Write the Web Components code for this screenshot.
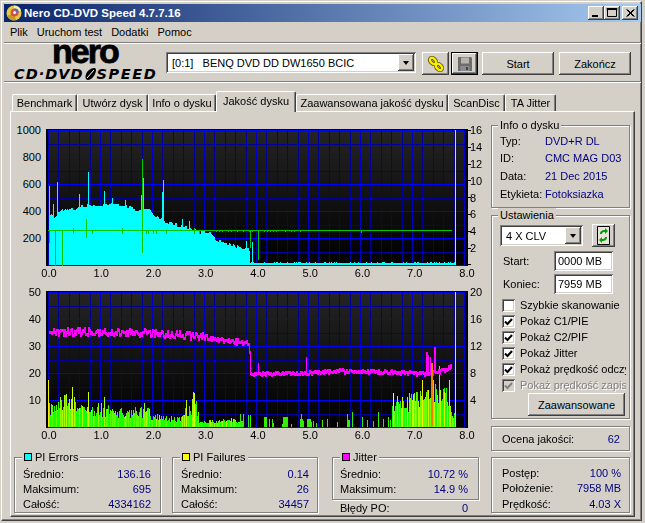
<!DOCTYPE html>
<html>
<head>
<meta charset="utf-8">
<title>Nero CD-DVD Speed</title>
<style>
  html, body { margin: 0; padding: 0; background: #d4d0c8; }
  body { font: 11px/14px "Liberation Sans", Arial, sans-serif; color: #000; }
</style>
</head>
<body>
<nero-window>
  <nero-title>Nero CD-DVD Speed 4.7.7.16</nero-title>
  <nero-menu><span>Plik</span><span>Uruchom test</span><span>Dodatki</span><span>Pomoc</span></nero-menu>
  <nero-toolbar></nero-toolbar>
  <nero-tabs>
    <nero-tab w="65">Benchmark</nero-tab>
    <nero-tab w="71">Utwórz dysk</nero-tab>
    <nero-tab w="68">Info o dysku</nero-tab>
    <nero-tab w="80" selected>Jakość dysku</nero-tab>
    <nero-tab w="152">Zaawansowana jakość dysku</nero-tab>
    <nero-tab w="57">ScanDisc</nero-tab>
    <nero-tab w="51">TA Jitter</nero-tab>
  </nero-tabs>
  <tab-panel>
    <div slot="left" style="padding-top: 17px">
      <nero-chart kind="errors"></nero-chart>
      <nero-chart kind="jitter"></nero-chart>
      <stat-row-boxes></stat-row-boxes>
    </div>
    <side-column slot="right"></side-column>
  </tab-panel>
</nero-window>

<script>
const FACE = '#d4d0c8';
const RAISED = 'box-shadow: inset -1px -1px #404040, inset 1px 1px #fff, inset -2px -2px #808080;';
const SUNKEN = 'box-shadow: inset 1px 1px #808080, inset -1px -1px #fff, inset 2px 2px #404040, inset -2px -2px ' + FACE + ';';

// window frame
class NeroWindow extends HTMLElement {
  constructor() {
    super();
    this.attachShadow({mode: 'open'}).innerHTML = `
    <style>
      :host { display: block; width: 645px; height: 523px; box-sizing: border-box; padding: 1px 3px 2px 1px; background: ${FACE}; overflow: hidden; }
      .frame { box-sizing: border-box; height: 100%; padding: 2px 0 0 2px; border-top: 1px solid #fff; border-left: 1px solid #fff; border-right: 1px solid #404040; border-bottom: 1px solid #404040; box-shadow: inset -1px -1px #808080; }
    </style>
    <div class="frame"><slot></slot></div>`;
  }
}
customElements.define('nero-window', NeroWindow);

class NeroTitle extends HTMLElement {
  constructor() {
    super();
    this.attachShadow({mode: 'open'}).innerHTML = `
    <style>
      :host { display: flex; align-items: center; height: 18px; padding: 0 3px 0 2px; color: #fff; font-weight: bold; font-size: 11.5px; background: linear-gradient(90deg, #0a246a, #a6caf0); }
      svg.app { width: 16px; height: 16px; margin-right: 2px; flex: none; }
      .text { flex: 1; white-space: nowrap; }
      .ctl { width: 16px; height: 14px; background: ${FACE}; ${RAISED} display: block; }
      .ctl.close { margin-left: 2px; }
    </style>
    <svg class="app" viewBox="0 0 16 16">
      <circle cx="8" cy="8" r="7.5" fill="#e8c840"/><path d="M8 .5a7.5 7.5 0 0 1 7 5L8 8z" fill="#f6eea0"/><path d="M1 11a7.5 7.5 0 0 0 9 4L8 8z" fill="#c89a20"/>
      <circle cx="8.6" cy="7.6" r="4" fill="#d85040"/><path d="M8.6 3.6a4 4 0 0 1 4 4H8.6z" fill="#4070d0"/><circle cx="8.6" cy="7.6" r="1.5" fill="#fff"/>
    </svg>
    <span class="text"><slot></slot></span>
    <svg class="ctl" viewBox="0 0 16 14"><rect x="4" y="9" width="6" height="2" fill="#000"/></svg>
    <svg class="ctl" viewBox="0 0 16 14"><path d="M3.5 3.5h9v7h-9zM3 2.5h10v1H3z" fill="none" stroke="#000"/></svg>
    <svg class="ctl close" viewBox="0 0 16 14"><path d="M4.5 3.5l7 7M5.5 3.5l7 7M11.5 3.5l-7 7M12.5 3.5l-7 7" stroke="#000" fill="none"/></svg>`;
  }
}
customElements.define('nero-title', NeroTitle);

class NeroMenu extends HTMLElement {
  constructor() {
    super();
    this.attachShadow({mode: 'open'}).innerHTML = `
    <style>
      :host { display: block; height: 20px; }
      .bar { display: flex; gap: 9px; padding-left: 6px; height: 20px; align-items: center; }
      ::slotted(span) { white-space: nowrap; }
    </style>
    <div class="bar"><slot></slot></div>`;
  }
}
customElements.define('nero-menu', NeroMenu);

class WinButton extends HTMLElement {
  constructor() {
    super();
    const def = this.hasAttribute('default');
    this.attachShadow({mode: 'open'}).innerHTML = `
    <style>
      :host { display: inline-flex; align-items: center; justify-content: center; box-sizing: border-box; flex: none; background: ${FACE}; ${def ? 'outline: 1px solid #000; outline-offset: -1px; box-shadow: inset -2px -2px #404040, inset 2px 2px #fff, inset -3px -3px #808080;' : RAISED} }
    </style>
    <slot></slot>`;
  }
}
customElements.define('win-button', WinButton);

class WinCombo extends HTMLElement {
  constructor() {
    super();
    this.attachShadow({mode: 'open'}).innerHTML = `
    <style>
      :host { display: flex; box-sizing: border-box; flex: none; background: #fff; padding: 2px; ${SUNKEN} }
      .val { flex: 1; padding-left: 4px; white-space: pre; align-self: center; overflow: hidden; }
      .arrow { width: 16px; background: ${FACE}; display: flex; align-items: center; justify-content: center; ${RAISED} }
      .arrow i { border: 3.5px solid transparent; border-top: 4px solid #000; border-bottom: 0; width: 0; height: 0; }
    </style>
    <span class="val"><slot></slot></span><span class="arrow"><i></i></span>`;
  }
}
customElements.define('win-combo', WinCombo);

class NeroLogo extends HTMLElement {
  constructor() {
    super();
    this.attachShadow({mode: 'open'}).innerHTML = `
    <style>
      :host { display: block; width: 150px; flex: none; color: #000; margin-top: -12px; }
      .nero { font: bold 34px/22px "Liberation Sans", sans-serif; height: 22px; letter-spacing: -2px; -webkit-text-stroke: 0.8px #000; padding-left: 38px; }
      .sub { display: flex; align-items: center; height: 12px; margin-top: 6px; font: italic bold 14.5px/12px "DejaVu Sans", sans-serif; white-space: nowrap; }
      .a { letter-spacing: 1px; }
      .b { letter-spacing: 1.6px; }
      svg { width: 14px; height: 14px; flex: none; margin: 0 -1px 0 0; }
    </style>
    <div class="nero">nero</div>
    <div class="sub"><span class="a">CD·DVD</span><svg viewBox="0 0 14 14"><path d="M5 13C1 13 2 6 6 3c3-2 7-3 7 0 0 4-4 10-8 10z" fill="#000"/><path d="M4 11L11 3" stroke="#fff" stroke-width="1"/></svg><span class="b">SPEED</span></div>`;
  }
}
customElements.define('nero-logo', NeroLogo);

class NeroToolbar extends HTMLElement {
  constructor() {
    super();
    this.attachShadow({mode: 'open'}).innerHTML = `
    <style>
      :host { display: flex; align-items: flex-start; height: 29px; padding: 9px 10px 0 10px; margin-top: 1px; box-shadow: 0 -1px #808080, inset 0 1px #fff, 0 1px #fff; border-bottom: 1px solid #808080; }
      nero-logo { margin-right: 2px; }
      win-combo { width: 250px; height: 21px; margin: 0 6px 0 0; }
      win-button { height: 23px; }
      .ic { width: 27px; }
      .ic + .ic { margin-left: 2px; margin-right: 4px; }
      .txt { width: 72px; }
      .txt + .txt { margin-left: 5px; }
    </style>
    <nero-logo></nero-logo>
    <win-combo>[0:1]   BENQ DVD DD DW1650 BCIC</win-combo>
    <win-button class="ic">
      <svg width="18" height="18" viewBox="0 0 18 18"><g fill="none"><g stroke="#4a4400" stroke-width="4"><ellipse cx="6" cy="6" rx="3.6" ry="2.4" transform="rotate(45 6 6)"/><ellipse cx="12" cy="12" rx="3.6" ry="2.4" transform="rotate(45 12 12)"/></g><g stroke="#fcec00" stroke-width="2.4"><ellipse cx="6" cy="6" rx="3.6" ry="2.4" transform="rotate(45 6 6)"/><ellipse cx="12" cy="12" rx="3.6" ry="2.4" transform="rotate(45 12 12)"/></g></g></svg>
    </win-button>
    <win-button class="ic" default>
      <svg width="16" height="16" viewBox="0 0 16 16"><path d="M1 1h13l1 1v13H1z" fill="#6c6c6c"/><rect x="4" y="1.5" width="8" height="6" fill="#b8b4ac"/><rect x="3.5" y="10" width="9" height="5" fill="#8c8c8c"/><rect x="9" y="11" width="2" height="3" fill="#444"/></svg>
    </win-button>
    <win-button class="txt">Start</win-button>
    <win-button class="txt">Zakończ</win-button>`;
  }
}
customElements.define('nero-toolbar', NeroToolbar);

class NeroTabs extends HTMLElement {
  constructor() {
    super();
    this.attachShadow({mode: 'open'}).innerHTML = `
    <style>
      :host { display: flex; align-items: flex-end; height: 20px; padding: 9px 0 0 8px; position: relative; z-index: 1; }
    </style>
    <slot></slot>`;
  }
}
customElements.define('nero-tabs', NeroTabs);

class NeroTab extends HTMLElement {
  constructor() {
    super();
    const sel = this.hasAttribute('selected');
    this.attachShadow({mode: 'open'}).innerHTML = `
    <style>
      :host { display: flex; align-items: center; justify-content: center; box-sizing: border-box; white-space: nowrap; background: ${FACE};
        width: ${this.getAttribute('w')}px; height: ${sel ? 21 : 17}px; ${sel ? 'margin-bottom: -1px; padding-bottom: 2px;' : ''}
        border-top: 1px solid #fff; border-left: 1px solid #fff; border-right: 1px solid #404040; border-radius: 2px 2px 0 0;
        box-shadow: inset -1px 0 #808080; }
    </style>
    <slot></slot>`;
  }
}
customElements.define('nero-tab', NeroTab);

class TabPanel extends HTMLElement {
  constructor() {
    super();
    this.attachShadow({mode: 'open'}).innerHTML = `
    <style>
      :host { display: grid; grid-template-columns: 480px 139px; box-sizing: border-box; width: 625px; height: 406px; margin-left: 6px; border-top: 1px solid #fff; border-left: 1px solid #fff; border-right: 1px solid #404040; border-bottom: 1px solid #404040; box-shadow: inset -1px -1px #808080; }
    </style>
    <slot name="left"></slot><slot name="right"></slot>`;
  }
}
customElements.define('tab-panel', TabPanel);

// small seeded random, so the charts look the same on each load
function seeded(s) {
  return () => (s = (s * 16807) % 2147483647) / 2147483647;
}
function env(table, x) {
  for (let i = 1; i < table.length; i++) {
    if (x <= table[i][0]) {
      const a = table[i - 1], b = table[i];
      return a[1] + (b[1] - a[1]) * (x - a[0]) / (b[0] - a[0]);
    }
  }
  return table[table.length - 1][1];
}

class NeroChart extends HTMLElement {
  constructor() {
    super();
    const errors = this.getAttribute('kind') === 'errors';
    const left = errors ? [1000, 800, 600, 400, 200, ''] : [50, 40, 30, 20, 10, ''];
    const right = errors ? [16, 14, 12, 10, 8, 6, 4, 2, ''] : [20, 16, 12, 8, 4, ''];
    const xs = ['0.0', '1.0', '2.0', '3.0', '4.0', '5.0', '6.0', '7.0', '8.0'];
    this.attachShadow({mode: 'open'}).innerHTML = `
    <style>
      :host { display: grid; grid-template-columns: 35px 425px 1fr; grid-template-rows: 137px ${errors ? 25 : 29}px; }
      canvas { display: block; }
      .l, .r { display: flex; flex-direction: column; justify-content: space-between; height: 149px; margin-top: -6px; line-height: 14px; }
      .l span { height: 14px; text-align: right; padding-right: 5px; }
      .r span { height: 14px; margin-left: -1px; }
      .x { grid-column: 2; display: flex; justify-content: space-between; width: 418px; margin-left: 3px; line-height: 14px; }
      .x span { width: 0; display: flex; justify-content: center; }
    </style>
    <div class="l">${left.map(t => `<span>${t}</span>`).join('')}</div>
    <canvas width="425" height="137"></canvas>
    <div class="r">${right.map(t => `<span>${t}</span>`).join('')}</div>
    <div class="x">${xs.map(t => `<span>${t}</span>`).join('')}</div>`;
    this.draw(this.shadowRoot.querySelector('canvas').getContext('2d'), errors);
  }

  draw(c, errors) {
    const rect = (col, x, y, w, h) => { c.fillStyle = col; c.fillRect(x, y, w, h); };
    const END = 409;  // the white line, where the scan stopped

    rect('#000', 0, 0, 422, 137);
    const g = c.createLinearGradient(0, 1, 0, 136);
    g.addColorStop(0, '#242424');
    g.addColorStop(1, '#000');
    rect(g, 2, 1, 417, 135);

    // grid
    for (let i = 0; i <= 40; i++) {
      const x = 2 + Math.round(i * 10.4);
      rect(i % 5 === 0 ? '#0000c8' : '#000098', x, 1, 1, 135);
    }
    for (let i = 0; i <= 10; i++) {
      const y = 1 + Math.round(i * 13.5);
      rect(i % 2 === 0 ? '#0000ff' : '#000098', 2, y, 417, 1);
    }

    if (errors) this.drawErrors(rect, END);
    else this.drawJitter(rect, END);

    rect('#d8d8d8', END, 1, 1, 135);
  }

  drawErrors(rect, END) {
    const r = seeded(4711);
    const table = [[0, 400], [.1, 340], [.2, 395], [.3, 425], [.5, 400], [.6, 435], [1, 445], [1.25, 455], [1.5, 435], [1.7, 410], [1.9, 405], [2.05, 370], [2.2, 320], [2.5, 295], [2.8, 250], [3.1, 235], [3.2, 185], [3.5, 155], [3.85, 110], [3.86, 16], [7.2, 16], [7.35, 25], [7.8, 22]];
    const spikes = {4: 450, 8: 620, 30: 530, 39: 695, 55: 550, 63: 500, 76: 480, 92: 520, 94: 650, 113: 540, 114: 630, 133: 340, 140: 330, 197: 175, 203: 170};
    let noise = 0;
    for (let i = 0; 3 + i < END; i++) {
      const x = i / 52;
      if (i % 2 === 0) noise = (r() - .5) * 30;
      let v = env(table, x);
      if (x < 3.86) v += noise;
      else v = r() < .18 ? 22 : 14;
      if (spikes[i]) v = spikes[i];
      if (i === 0) v = 590;
      rect('#00ffff', 3 + i, 136 - Math.round(v * .1345), 1, Math.round(v * .1345));
    }
    // speed line with its dips
    const G = '#00c800';
    rect(G, 2, 101, 404, 1);
    [[3, 101, 13], [9, 101, 37], [16, 101, 37], [96, 30, 94], [40, 90, 19], [204, 101, 18], [212, 101, 30]].forEach(a => rect(G, a[0], a[1], 1, a[2]));
    [27, 46, 76, 100, 102, 107, 110, 120, 148, 153].forEach(x => rect(G, x, 102, 1, 3));
    [27, 76, 148].forEach(x => rect(G, x, 99, 1, 2));
    for (let x = 170; x < 256; x += 3) if (r() < .6) rect(G, x, 102, 1, 1);
    rect(G, 315, 102, 1, 2);
    // ticks of the right axis
    for (let i = 0; i < 8; i++) rect('#000', 422, 1 + Math.round(i * 16.8), 3, 1);
    rect('#000', 422, 135, 3, 1);
  }

  drawJitter(rect, END) {
    const r = seeded(90210);
    const base = [[0, 6], [.18, 7], [.25, 9], [.5, 9], [.55, 6], [1.2, 6], [1.3, 5], [1.9, 5.5], [2, 3.5], [2.55, 3], [2.62, 6], [2.85, 7], [2.9, 2], [3.8, 2.5]];
    const bar = (x, h, col) => rect(col, x, 136 - h, 1, h);
    for (let x = 3; x < 194; x++) {
      const v = env(base, (x - 2.5) / 52);
      const h = Math.max(3, Math.round(v * 2.68 * (.6 + r() * .8)));
      const t = r();
      bar(x, h, t < .12 ? '#a8ff00' : t < .4 ? '#58ff00' : '#18ff00');
    }
    // spikes on the left half
    [[2, 47, '#f0f000'], [3, 24, '#60ff00'], [14, 30, '#90ff00'], [18, 32, '#a8ff00'], [23, 28, '#b0ff00'], [25, 28, '#a8ff00'], [26, 40, '#d0ff00'], [28, 30, '#b0ff00'], [42, 35, '#d0ff00'], [52, 24, '#90ff00'], [55, 24, '#90ff00'], [58, 30, '#a0ff00'], [98, 24, '#90ff00'], [140, 27, '#c8ff00'], [147, 35, '#b0ff00'], [148, 34, '#d0ff00'], [146, 28, '#a0ff00']].forEach(a => bar(a[0], a[1], a[2]));
    // sparse part in the middle, read from the picture
    [[194, 13], [195, 6], [196, 6], [197, 13], [202, 12], [204, 12], [218, 10], [219, 10], [220, 10], [223, 8], [226, 8], [227, 4], [236, 3], [237, 10], [238, 10], [239, 10], [240, 10], [241, 10], [245, 3], [254, 8], [255, 13], [256, 8], [257, 6], [261, 8], [262, 8], [263, 8], [264, 8], [265, 5], [267, 6], [270, 4], [276, 7], [281, 8], [291, 5], [301, 13], [302, 7], [303, 7], [306, 15], [316, 10], [321, 7], [327, 6], [332, 15], [337, 8], [342, 10], [344, 7]].forEach(a => bar(a[0], a[1], '#30f000'));
    // burst near the end
    const tail = [[6.55, 6], [6.7, 9], [6.95, 10], [7.2, 12], [7.35, 14], [7.6, 12], [7.72, 10], [7.75, 5]];
    for (let x = 346; x < END; x++) {
      const v = env(tail, (x - 2.5) / 52);
      const h = Math.round(v * 2.68 * (.55 + r() * .75));
      const t = r();
      bar(x, h, t < .2 ? '#b8ff00' : t < .5 ? '#68ff00' : '#18ff00');
    }
    [[347, 34, '#f8f8a0'], [356, 30, '#c8ff00'], [361, 25, '#c8ff00'], [367, 32, '#c8ff00'], [372, 26, '#b0ff00'], [376, 47, '#f0f000'], [382, 37, '#d8ff00'], [391, 32, '#c8ff00'], [393, 61, '#f0c000'], [398, 35, '#d8ff00'], [403, 47, '#f0e000']].forEach(a => bar(a[0], a[1], a[2]));

    // jitter
    const M = '#ff00ff';
    const jt = [[0, 35.5], [1, 35.6], [2, 35.3], [2.6, 34.4], [3.1, 33.6], [3.4, 32.4], [3.85, 31.4], [3.87, 20], [5, 20.2], [5.6, 20.9], [6.4, 20.7], [6.8, 20.3], [7.2, 20], [7.45, 20.6], [7.62, 21.5], [7.72, 22.7]];
    const ys = v => Math.round(136 - v * 2.68);
    let prev = null;
    for (let x = 3; x < 406; x++) {
      const v0 = (x - 2.5) / 52;
      let v = env(jt, v0);
      v += (r() - .5) * (v0 < 3.87 ? (v0 > 3 ? 1.8 : 2.8) : 1.2);
      const y = ys(v);
      if (prev === null) prev = y;
      rect(M, x, Math.min(y, prev) - 1, 1, Math.abs(y - prev) + 3);
      prev = y;
    }
    [[212, 23.8], [260, 26], [380, 28], [381, 28], [382, 27], [388, 29.8], [389, 29.8], [384, 26]].forEach(a => rect(M, a[0], ys(a[1]), 1, ys(20) - ys(a[1])));
    rect('#f08000', 385, 72, 2, 63);
  }
}
customElements.define('nero-chart', NeroChart);

class GroupBox extends HTMLElement {
  constructor() {
    super();
    const swatch = this.getAttribute('swatch');
    const legend = this.getAttribute('legend');
    this.attachShadow({mode: 'open'}).innerHTML = `
    <style>
      :host { display: block; box-sizing: border-box; position: relative; border: 1px solid #808080; box-shadow: inset 1px 1px #fff, 1px 1px #fff; flex: none; }
      .legend { position: absolute; top: -8px; left: ${swatch ? 7 : 6}px; display: flex; align-items: center; gap: 3px; padding: 0 2px; background: ${FACE}; line-height: 14px; white-space: nowrap; }
      .sw { width: 8px; height: 8px; box-sizing: border-box; border: 1px solid #000; background: ${swatch}; }
    </style>
    ${legend ? `<div class="legend">${swatch ? '<i class="sw"></i>' : ''}${legend}</div>` : ''}
    <slot></slot>`;
  }
}
customElements.define('group-box', GroupBox);

class DataRow extends HTMLElement {
  constructor() {
    super();
    this.attachShadow({mode: 'open'}).innerHTML = `
    <style>
      :host { display: flex; justify-content: space-between; height: 15px; align-items: center; white-space: nowrap; }
      .v { color: #000080; }
    </style>
    <span>${this.getAttribute('label')}</span><span class="v">${this.getAttribute('value')}</span>`;
  }
}
customElements.define('data-row', DataRow);

class StatRowBoxes extends HTMLElement {
  constructor() {
    super();
    this.attachShadow({mode: 'open'}).innerHTML = `
    <style>
      :host { display: flex; align-items: flex-start; padding-left: 3px; }
      group-box { padding: 8px 9px 0 8px; width: 147px; height: 56px; }
      .b2 { margin-left: 11px; width: 146px; padding-right: 8px; }
      .col { margin-left: 14px; width: 147px; }
      .col group-box { height: 43px; padding: 8px 10px 0 7px; }
      .po { padding: 0 11px 0 8px; }
    </style>
    <group-box legend="PI Errors" swatch="#00ffff">
      <data-row label="Średnio:" value="136.16"></data-row>
      <data-row label="Maksimum:" value="695"></data-row>
      <data-row label="Całość:" value="4334162"></data-row>
    </group-box>
    <group-box class="b2" legend="PI Failures" swatch="#ffff00">
      <data-row label="Średnio:" value="0.14"></data-row>
      <data-row label="Maksimum:" value="26"></data-row>
      <data-row label="Całość:" value="34457"></data-row>
    </group-box>
    <div class="col">
      <group-box legend="Jitter" swatch="#ff00ff">
        <data-row label="Średnio:" value="10.72 %"></data-row>
        <data-row label="Maksimum:" value="14.9 %"></data-row>
      </group-box>
      <div class="po"><data-row label="Błędy PO:" value="0"></data-row></div>
    </div>`;
  }
}
customElements.define('stat-row-boxes', StatRowBoxes);

class WinCheck extends HTMLElement {
  constructor() {
    super();
    const on = this.hasAttribute('checked');
    const off = this.hasAttribute('disabled');
    this.attachShadow({mode: 'open'}).innerHTML = `
    <style>
      :host { display: flex; align-items: center; height: 16px; white-space: nowrap; overflow: hidden; width: 124px; }
      .box { width: 13px; height: 13px; flex: none; box-sizing: border-box; background: ${off ? FACE : '#fff'}; margin-right: 5px; ${SUNKEN} }
      svg { display: block; }
      .t { ${off ? 'color: #808080; text-shadow: 1px 1px #fff;' : ''} }
    </style>
    <span class="box">${on ? `<svg width="13" height="13" viewBox="0 0 13 13"><path d="M3 6.5l2.5 2.5L10 4" fill="none" stroke="${off ? '#808080' : '#000'}" stroke-width="2"/></svg>` : ''}</span>
    <span class="t"><slot></slot></span>`;
  }
}
customElements.define('win-check', WinCheck);

class WinInput extends HTMLElement {
  constructor() {
    super();
    this.attachShadow({mode: 'open'}).innerHTML = `
    <style>
      :host { display: flex; align-items: center; box-sizing: border-box; width: 59px; height: 20px; padding-left: 4px; background: #fff; ${SUNKEN} }
    </style>
    <slot></slot>`;
  }
}
customElements.define('win-input', WinInput);

class SideColumn extends HTMLElement {
  constructor() {
    super();
    this.attachShadow({mode: 'open'}).innerHTML = `
    <style>
      :host { display: flex; flex-direction: column; padding-top: 13px; }
      .info { height: 83px; padding: 6px 8px; }
      .info div { display: grid; grid-template-columns: 45px 1fr; height: 17.6px; align-items: center; white-space: nowrap; }
      .info b { font-weight: normal; color: #000080; }
      .set { height: 204px; margin-top: 7px; padding: 8px 0 0 8px; }
      .top { display: flex; gap: 9px; align-items: flex-start; }
      .top win-combo { width: 83px; height: 21px; margin-top: 1px; }
      .top win-button { width: 23px; height: 23px; }
      .fld { display: flex; align-items: center; justify-content: space-between; width: 110px; padding-left: 3px; margin-top: 3px; }
      .fld.first { margin-top: 4px; }
      .checks { margin: 3px 0 0 2px; }
      .adv { display: flex; justify-content: flex-end; padding-right: 4px; }
      .adv win-button { width: 97px; height: 23px; }
      .score { height: 25px; margin-top: 7px; padding: 4px 9px 0 10px; }
      .prog { height: 56px; margin-top: 6px; padding: 7px 8px 0 10px; }
      .prog data-row { height: 15.6px; }
    </style>
    <group-box class="info" legend="Info o dysku">
      <div>Typ:<b>DVD+R DL</b></div>
      <div>ID:<b>CMC MAG D03</b></div>
      <div>Data:<b>21 Dec 2015</b></div>
      <div>Etykieta:<b>Fotoksiazka</b></div>
    </group-box>
    <group-box class="set" legend="Ustawienia">
      <div class="top">
        <win-combo>4 X CLV</win-combo>
        <win-button>
          <svg width="15" height="19" viewBox="0 0 15 19"><path d="M1.5.5h12v18h-12z" fill="#e8e4dc" stroke="#000"/><path d="M4 8c0-3 2-4 5-4V2l3 3-3 3V6c-2 0-3 .6-3 2zM11 11c0 3-2 4-5 4v2l-3-3 3-3v2c2 0 3-.6 3-2z" fill="#00a000"/></svg>
        </win-button>
      </div>
      <div class="fld first">Start:<win-input>0000 MB</win-input></div>
      <div class="fld">Koniec:<win-input>7959 MB</win-input></div>
      <div class="checks">
        <win-check>Szybkie skanowanie</win-check>
        <win-check checked>Pokaż C1/PIE</win-check>
        <win-check checked>Pokaż C2/PIF</win-check>
        <win-check checked>Pokaż Jitter</win-check>
        <win-check checked>Pokaż prędkość odczytu</win-check>
        <win-check checked disabled>Pokaż prędkość zapisu</win-check>
      </div>
      <div class="adv"><win-button>Zaawansowane</win-button></div>
    </group-box>
    <group-box class="score"><data-row label="Ocena jakości:" value="62"></data-row></group-box>
    <group-box class="prog">
      <data-row label="Postęp:" value="100 %"></data-row>
      <data-row label="Położenie:" value="7958 MB"></data-row>
      <data-row label="Prędkość:" value="4.03 X"></data-row>
    </group-box>`;
  }
}
customElements.define('side-column', SideColumn);
</script>
</body>
</html>
